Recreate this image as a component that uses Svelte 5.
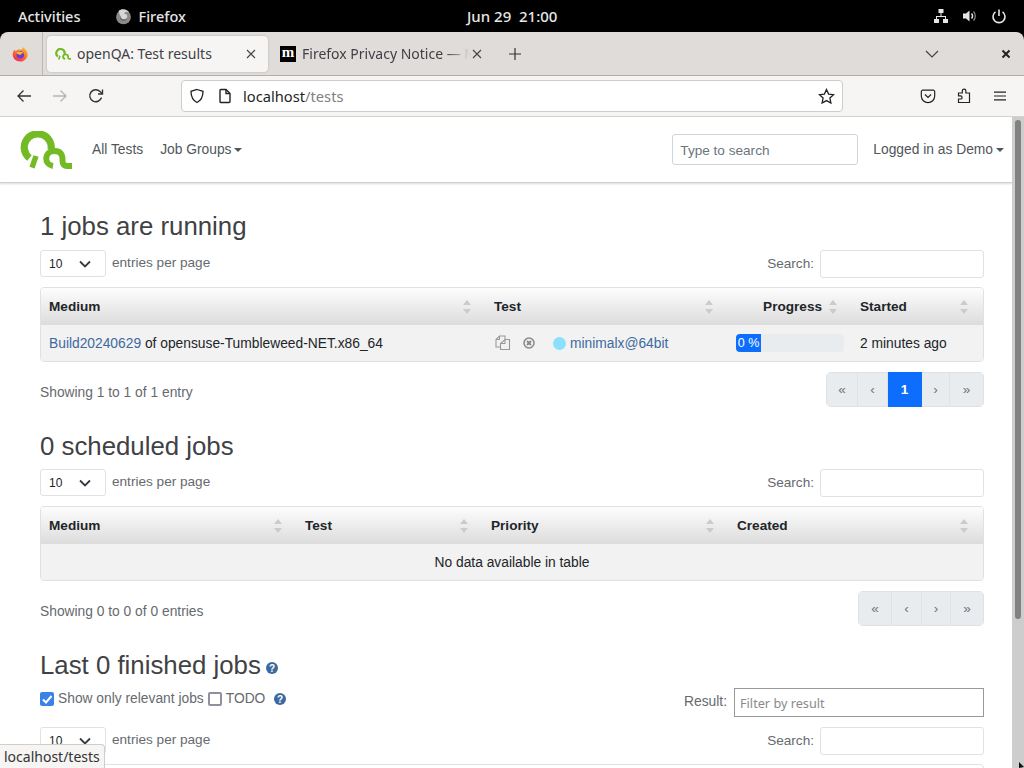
<script>
	const sortIcon = 'M4 0 L8 5 L0 5 Z M4 14 L8 9 L0 9 Z';
	const runningCols = [
		{ label: 'Medium', width: 445 },
		{ label: 'Test', width: 242 },
		{ label: 'Progress', width: 124, right: true },
		{ label: 'Started', width: 131 }
	];
	const scheduledCols = [
		{ label: 'Medium', width: 256 },
		{ label: 'Test', width: 186 },
		{ label: 'Priority', width: 246 },
		{ label: 'Created', width: 254 }
	];
	const fullPager = [
		{ text: '«', width: 32 },
		{ text: '‹', width: 30 },
		{ text: '1', width: 34, current: true },
		{ text: '›', width: 28 },
		{ text: '»', width: 34 }
	];
	const emptyPager = [
		{ text: '«', width: 34 },
		{ text: '‹', width: 30 },
		{ text: '›', width: 29 },
		{ text: '»', width: 33 }
	];
</script>

{#snippet lengthRow()}
	<div class="controls">
		<div class="length">
			<span class="select">10
				<svg width="12" height="8" viewBox="0 0 12 8"><path d="M1 1.500 L6 6.500 L11 1.500" fill="none" stroke="#343a40" stroke-width="1.800" /></svg>
			</span>
			<span class="muted per-page">entries per page</span>
		</div>
		<label class="muted search"><span class="search-label">Search:</span> <span class="input"></span></label>
	</div>
{/snippet}

{#snippet headRow(cols)}
	<div class="thead">
		{#each cols as col}
			<div class="th" style="width: {col.width}px">
				{#if col.right}<span class="grow"></span>{/if}
				<span>{col.label}</span>
				{#if !col.right}<span class="grow"></span>{/if}
				<svg class="sort" width="8" height="14" viewBox="0 0 8 14"><path d={sortIcon} fill="#c9cbcd" /></svg>
			</div>
		{/each}
	</div>
{/snippet}

{#snippet pager(cells)}
	<div class="pager">
		{#each cells as cell}
			<span class="pg" class:current={cell.current} style="width: {cell.width}px">{cell.text}</span>
		{/each}
	</div>
{/snippet}

{#snippet qaLogo(width, height)}
	<svg {width} {height} viewBox="0 0 52 38" fill="none" stroke="#73ba25">
		<path d="M9.500 27 A 13.500 13.500 0 1 1 31 19" stroke-width="7.200" />
		<path d="M16 25 L12 36.700" stroke-width="5.400" />
		<path d="M33 35 C 23.500 33.500 24 20 34.500 20 C 43.500 20 42.500 28 42.500 30 C 42.500 33.500 44.500 35 47 35 L 52 35" stroke-width="6" />
	</svg>
{/snippet}

<div class="screen">
	<header class="shell-bar">
		<span class="activities">Activities</span>
		<span class="app-name">
			<svg width="17" height="17" viewBox="0 0 18 18">
				<circle cx="9" cy="9.500" r="7.800" fill="#8b8b8b" />
				<circle cx="9" cy="10" r="3.500" fill="#5f5f5f" />
				<path d="M4 3 C6 1 12 0 15 5 C12 3 10 4 10 6 C13 6 14 9 12 11 C10 13 6 12 6 9 C5 7 4 5 4 3 Z" fill="#d6d6d6" />
			</svg>
			Firefox
		</span>
		<span class="clock">Jun 29&nbsp; 21:00</span>
		<span class="tray">
			<svg width="16" height="16" viewBox="0 0 16 16" fill="#e6e6e6">
				<rect x="5.500" y="1" width="5" height="4" /><rect x="1" y="11" width="5" height="4" /><rect x="10" y="11" width="5" height="4" />
				<path d="M7.500 5h1v3h4.500v3h-1V9H4v2H3V8h4.500z" />
			</svg>
			<svg width="16" height="16" viewBox="0 0 16 16">
				<path d="M1 5.500h3L7.500 2.500v11L4 10.500H1z" fill="#e6e6e6" />
				<path d="M9.500 5.500a3.500 3.500 0 0 1 0 5" fill="none" stroke="#e6e6e6" stroke-width="1.500" />
				<path d="M11.500 3.500a6.500 6.500 0 0 1 0 9" fill="none" stroke="#888" stroke-width="1.200" />
			</svg>
			<svg width="16" height="16" viewBox="0 0 16 16" fill="none" stroke="#e6e6e6" stroke-width="1.600">
				<path d="M8 1.500v6.500" />
				<path d="M4.500 3.800a6 6 0 1 0 7 0" />
			</svg>
		</span>
	</header>

	<div class="window">
		<div class="tabbar">
			<div class="ff-button">
				<svg width="16" height="16" viewBox="0 0 16 16">
					<defs>
						<linearGradient id="ffg" x1="0.800" y1="0" x2="0.200" y2="1">
							<stop offset="0" stop-color="#ffc21f" />
							<stop offset="0.450" stop-color="#ff7a2b" />
							<stop offset="1" stop-color="#e8255f" />
						</linearGradient>
					</defs>
					<path d="M11 0.500 C11.500 2 12.500 2.500 13.500 3.500 C15.500 5.500 16 8 15.400 10 C14.500 13.500 11.500 15.500 8 15.500 C4 15.500 0.700 12.300 0.700 8.500 C0.700 6.500 1.500 4.700 2.800 3.400 C3 4.500 3.500 5 4 5.200 C5 3 8 3.500 9.500 3.500 C10.500 2.800 11 1.800 11 0.500 Z" fill="url(#ffg)" />
					<circle cx="8.300" cy="8.700" r="3.800" fill="#6b3bd0" />
					<path d="M4.500 7 C6 5 10 5 12.300 7.800 C10.500 6.900 9.500 7.500 9.200 8.500 C7.500 9 5.500 8.500 4.500 7 Z" fill="#ffb52e" />
				</svg>
			</div>
			<div class="tab active">
				<span class="favicon">{@render qaLogo(16, 12)}</span>
				<span class="tab-title">openQA: Test results</span>
				<svg class="tab-close" width="10" height="10" viewBox="0 0 10 10"><path d="M1 1 L9 9 M9 1 L1 9" stroke="#444" stroke-width="1.100" /></svg>
			</div>
			<div class="tab second">
				<span class="moz-icon">m</span>
				<span class="tab-title fade">Firefox Privacy Notice — Mozilla</span>
				<svg class="tab-close" width="10" height="10" viewBox="0 0 10 10"><path d="M1 1 L9 9 M9 1 L1 9" stroke="#444" stroke-width="1.100" /></svg>
			</div>
			<svg class="new-tab" width="14" height="14" viewBox="0 0 14 14"><path d="M7 1v12M1 7h12" stroke="#333" stroke-width="1.200" /></svg>
			<span class="grow"></span>
			<svg class="tab-list" width="14" height="8" viewBox="0 0 14 8"><path d="M1 1 L7 7 L13 1" fill="none" stroke="#444" stroke-width="1.200" /></svg>
			<svg class="win-close" width="10" height="10" viewBox="0 0 10 10"><path d="M1.500 1.500 L8.500 8.500 M8.500 1.500 L1.500 8.500" stroke="#222" stroke-width="2" /></svg>
		</div>

		<div class="toolbar">
			<svg class="nav-icon first" width="16" height="16" viewBox="0 0 16 16" fill="none" stroke="#333" stroke-width="1.300"><path d="M15 8H2M7.500 2.500 2 8l5.500 5.500" /></svg>
			<svg class="nav-icon" width="16" height="16" viewBox="0 0 16 16" fill="none" stroke="#b5b5b5" stroke-width="1.300"><path d="M1 8h13M8.500 2.500 14 8l-5.500 5.500" /></svg>
			<svg class="nav-icon" width="16" height="16" viewBox="0 0 16 16" fill="none" stroke="#333" stroke-width="1.400"><path d="M13.500 9.500A6 6 0 1 1 12 3.500l2 2" /><path d="M14.500 1.500v4.500H10" /></svg>
			<div class="urlbar">
				<svg width="16" height="16" viewBox="0 0 16 16" fill="none" stroke="#222" stroke-width="1.300"><path d="M8 1.500 14 3.300c0 5-1.500 9-6 11.200C3.500 12.300 2 8.300 2 3.300z" /></svg>
				<svg class="page-icon" width="14" height="16" viewBox="0 0 14 16" fill="none" stroke="#222" stroke-width="1.400"><path d="M2 2.500a1 1 0 0 1 1-1h5l4 4v8a1 1 0 0 1-1 1H3a1 1 0 0 1-1-1z" /><path d="M8 1.500v4h4" /></svg>
				<span class="url">localhost<span class="url-path">/tests</span></span>
				<span class="grow"></span>
				<svg width="17" height="17" viewBox="0 0 17 17" fill="none" stroke="#222" stroke-width="1.300"><path d="M8.500 1.500l2.100 4.600 5 .6-3.700 3.400 1 5-4.400-2.500-4.400 2.500 1-5L1.400 6.700l5-.6z" /></svg>
			</div>
			<svg class="tool-icon pocket" width="16" height="16" viewBox="0 0 16 16" fill="none" stroke="#222" stroke-width="1.200"><path d="M2.800 2.200h10.400a1.500 1.500 0 0 1 1.500 1.500V8a6.700 6.700 0 0 1-13.400 0V3.700a1.500 1.500 0 0 1 1.500-1.500z" /><path d="M5 6.500l3 3 3-3" /></svg>
			<svg class="tool-icon" width="16" height="16" viewBox="0 0 16 16" fill="none" stroke="#222" stroke-width="1.200"><path d="M2.500 5h3.800V3a1.800 1.800 0 0 1 3.600 0v2h3.600v9.500H2.500V11h2a1.600 1.600 0 0 0 0-3.200h-2z" /></svg>
			<svg class="tool-icon" width="16" height="16" viewBox="0 0 16 16" stroke="#222" stroke-width="1.200"><path d="M2 4.200h12M2 8h12M2 11.800h12" /></svg>
		</div>

		<div class="viewport">
			<div class="page">
				<nav class="navbar">
					<span class="logo">{@render qaLogo(52, 38)}</span>
					<a class="nav-link">All Tests</a>
					<a class="nav-link groups">Job Groups<i class="caret"></i></a>
					<span class="grow"></span>
					<span class="nav-search">Type to search</span>
					<a class="nav-link user">Logged in as Demo<i class="caret"></i></a>
				</nav>

				<main class="content">
					<h2 class="first">1 jobs are running</h2>
					{@render lengthRow()}
					<div class="table">
						{@render headRow(runningCols)}
						<div class="row">
							<div class="td" style="width: 445px">
								<a>Build20240629</a>&nbsp;of opensuse-Tumbleweed-NET.x86_64
							</div>
							<div class="td test" style="width: 242px">
								<svg width="16" height="16" viewBox="0 0 16 16" fill="none" stroke="#9a9a9a" stroke-width="1.100"><path d="M5.500 12H1V4.500L4.500 1H10V4" /><path d="M4.500 1V4.500H1" /><path d="M10 4.500H14.500V14.500H5.500V8.500z" /><path d="M10 4.500V8.500H5.500" /></svg>
								<svg class="cancel" width="12" height="12" viewBox="0 0 12 12"><circle cx="6" cy="6" r="5" fill="none" stroke="#888" stroke-width="1.500" /><path d="M4 4l4 4M8 4l-4 4" stroke="#888" stroke-width="1.800" /></svg>
								<i class="dot"></i>
								<a>minimalx@64bit</a>
							</div>
							<div class="td" style="width: 124px">
								<div class="progress"><div class="bar" style="width: 25px">0 %</div></div>
							</div>
							<div class="td" style="width: 131px">2 minutes ago</div>
						</div>
					</div>
					<div class="info-row">
						<span class="muted info">Showing 1 to 1 of 1 entry</span>
						{@render pager(fullPager)}
					</div>

					<h2>0 scheduled jobs</h2>
					{@render lengthRow()}
					<div class="table">
						{@render headRow(scheduledCols)}
						<div class="row empty">No data available in table</div>
					</div>
					<div class="info-row">
						<span class="muted info">Showing 0 to 0 of 0 entries</span>
						{@render pager(emptyPager)}
					</div>

					<h2>Last 0 finished jobs<svg class="help big" width="12" height="12" viewBox="0 0 12 12"><circle cx="6" cy="6" r="6" fill="#3d6a9e" /><text x="6" y="9.500" text-anchor="middle" class="q">?</text></svg></h2>
					<div class="filters">
						<div class="checks">
							<span class="check on"><svg width="14" height="14" viewBox="0 0 14 14"><path d="M3 7.500 6 10.500 11.500 4" fill="none" stroke="#fff" stroke-width="2" /></svg></span>
							<span class="muted">Show only relevant jobs</span>
							<span class="check"></span>
							<span class="muted">TODO</span>
							<svg class="help" width="12" height="12" viewBox="0 0 12 12"><circle cx="6" cy="6" r="6" fill="#3d6a9e" /><text x="6" y="9.500" text-anchor="middle" class="q">?</text></svg>
						</div>
						<div class="result">
							<span class="muted result-label">Result:</span>
							<span class="result-input">Filter by result</span>
						</div>
					</div>
					{@render lengthRow()}
					<div class="table stub"></div>
				</main>
			</div>
			<div class="scrollbar"><div class="thumb"></div></div>
			<div class="status">localhost/tests</div>
			<svg class="pointer" width="5" height="6" viewBox="0 0 5 6"><path d="M0 0 L5 5 L0 6 Z" fill="#111" /></svg>
		</div>
	</div>
</div>

<style>
	:global(body) {
		margin: 0;
		background: #000;
		overflow: hidden;
	}

	.screen {
		width: 1024px;
		height: 768px;
		display: flex;
		flex-direction: column;
		overflow: hidden;
		font-family: 'Liberation Sans', Arial, sans-serif;
	}

	.grow {
		flex: 1;
	}

	/* ===== GNOME top bar ===== */
	.shell-bar {
		height: 32px;
		flex: none;
		display: flex;
		align-items: center;
		position: relative;
		background: #000;
		color: #e6e6e6;
		font-family: 'Noto Sans', sans-serif;
		font-size: 14.500px;
		font-weight: 500;
	}

	.activities {
		margin-left: 18px;
	}

	.app-name {
		display: flex;
		align-items: center;
		gap: 6px;
		margin-left: 35px;
	}

	.clock {
		position: absolute;
		left: 467px;
		font-size: 15px;
	}

	.tray {
		margin-left: auto;
		margin-right: 17px;
		display: flex;
		gap: 13px;
		align-items: center;
	}

	/* ===== Browser chrome ===== */
	.window {
		flex: 1;
		min-height: 0;
		display: flex;
		flex-direction: column;
		border-radius: 8px 8px 0 0;
		overflow: hidden;
		font-family: 'Noto Sans', sans-serif;
	}

	.tabbar {
		height: 44px;
		flex: none;
		display: flex;
		align-items: center;
		box-sizing: border-box;
		background: #dfdcd9;
		border-bottom: 1px solid #b0aeab;
	}

	.ff-button {
		width: 43px;
		height: 43px;
		flex: none;
		display: flex;
		align-items: center;
		padding-left: 12px;
		box-sizing: border-box;
		border-right: 1px solid #b9b7b4;
	}

	.tab {
		display: flex;
		align-items: center;
		height: 36px;
		box-sizing: border-box;
		font-size: 14px;
		color: #3f3f46;
		flex: none;
	}

	.tab.active {
		width: 221px;
		margin-left: 4px;
		padding: 0 12px 0 8px;
		background: #f6f5f3;
		border-radius: 4px;
		box-shadow: 0 0 2px rgba(0, 0, 0, 0.25);
	}

	.tab.second {
		width: 218px;
		padding: 0 0 0 12px;
	}

	.favicon {
		display: flex;
		margin-right: 6px;
	}

	.tab-title {
		flex: 1;
		white-space: nowrap;
		overflow: hidden;
		min-width: 0;
	}

	.tab-title.fade {
		mask-image: linear-gradient(to right, #000 85%, transparent 100%);
	}

	.moz-icon {
		width: 16px;
		height: 16px;
		margin-right: 6px;
		flex: none;
		background: #000;
		color: #fff;
		font: bold 15px/13px 'Liberation Serif', serif;
		text-align: center;
	}

	.tab-close {
		flex: none;
		margin-left: 8px;
	}

	.second .tab-close {
		margin-left: 2px;
		margin-right: 4px;
	}

	.new-tab {
		margin-left: 22px;
	}

	.tab-list {
		margin-right: 62px;
	}

	.win-close {
		margin-right: 13px;
	}

	.toolbar {
		height: 41px;
		flex: none;
		display: flex;
		align-items: center;
		background: #f6f5f3;
		border-bottom: 1px solid #d6d3cf;
		box-sizing: border-box;
	}

	.nav-icon {
		margin-left: 20px;
	}

	.nav-icon.first {
		margin-left: 16px;
	}

	.urlbar {
		width: 662px;
		height: 32px;
		box-sizing: border-box;
		margin-left: 77px;
		display: flex;
		align-items: center;
		padding: 0 7px 0 7px;
		background: #fff;
		border: 1px solid #cfcdc9;
		border-radius: 4px;
	}

	.page-icon {
		margin-left: 13px;
	}

	.url {
		margin-left: 11px;
		font-size: 14.700px;
		color: #1f1f1f;
	}

	.url-path {
		color: #808080;
	}

	.tool-icon {
		margin-left: 20px;
	}

	.tool-icon.pocket {
		margin-left: 77px;
	}

	/* ===== Page ===== */
	.viewport {
		flex: 1;
		min-height: 0;
		display: flex;
		position: relative;
		background: #fff;
		font-family: 'Liberation Sans', Arial, sans-serif;
	}

	.page {
		flex: 1;
		min-width: 0;
		overflow: hidden;
		font-size: 13.800px;
		color: #212529;
	}

	.scrollbar {
		width: 12px;
		flex: none;
		background: #cdcdcd;
		padding: 3px 3px 0;
		box-sizing: border-box;
	}

	.thumb {
		width: 6px;
		height: 499px;
		background: #7f8281;
		border-radius: 3px;
	}

	.status {
		position: absolute;
		left: 0;
		bottom: 0;
		width: 105px;
		height: 24px;
		line-height: 24px;
		padding: 0 4px;
		background: #f6f5f3;
		border: 1px solid #d0cec9;
		border-left: 0;
		border-bottom: 0;
		border-top-right-radius: 4px;
		box-sizing: border-box;
		font-family: 'Noto Sans', sans-serif;
		font-size: 14px;
		color: #333;
		white-space: nowrap;
	}

	.pointer {
		position: absolute;
		right: 0;
		bottom: 0;
	}

	.navbar {
		height: 66px;
		display: flex;
		align-items: center;
		box-sizing: border-box;
		padding: 0 0 0 20px;
		border-bottom: 1px solid #d0d0d0;
		box-shadow: 0 1px 2px rgba(0, 0, 0, 0.15);
	}

	.logo {
		display: flex;
		margin-right: 12px;
		margin-top: 1px;
	}

	.nav-link {
		padding: 0 8px;
		color: #50565b;
		white-space: nowrap;
	}

	.groups {
		margin-left: 1px;
	}

	.caret {
		display: inline-block;
		margin-left: 3px;
		vertical-align: 2px;
		border-top: 4px solid;
		border-left: 4px solid transparent;
		border-right: 4px solid transparent;
	}

	.nav-search {
		width: 186px;
		height: 31px;
		line-height: 31px;
		box-sizing: border-box;
		padding-left: 7px;
		border: 1px solid #ced4da;
		border-radius: 3px;
		color: #6c757d;
		font-size: 13.600px;
	}

	.user {
		margin-left: 7px;
	}

	.content {
		padding: 0 28px 0 40px;
	}

	h2 {
		margin: 23px 0 7px;
		height: 32px;
		font-size: 25.800px;
		font-weight: 400;
		line-height: 32px;
		color: #3f4245;
		white-space: nowrap;
	}

	h2.first {
		margin: 27px 0 8px;
	}

	.controls {
		display: flex;
		justify-content: space-between;
		align-items: flex-start;
		height: 28px;
	}

	.length {
		display: flex;
		align-items: center;
		gap: 6px;
	}

	.per-page {
		font-size: 13.600px;
		margin-top: -3px;
	}

	.muted {
		color: #666a6e;
	}

	.select {
		width: 66px;
		height: 27px;
		box-sizing: border-box;
		display: flex;
		align-items: center;
		justify-content: space-between;
		padding: 0 14px 0 8px;
		border: 1px solid #dee2e6;
		border-radius: 3px;
		font-size: 12px;
		color: #212529;
	}

	.search {
		display: flex;
		align-items: center;
		gap: 6px;
		font-size: 13.600px;
	}

	.search-label {
		margin-top: -2px;
	}

	.input {
		width: 164px;
		height: 28px;
		box-sizing: border-box;
		border: 1px solid #dee2e6;
		border-radius: 3px;
	}

	.table {
		margin-top: 9px;
		border: 1px solid #dee2e6;
		border-radius: 4px;
		overflow: hidden;
		width: 944px;
		box-sizing: border-box;
	}

	.table.stub {
		height: 40px;
	}

	.thead {
		height: 37px;
		display: flex;
		background: linear-gradient(to bottom, #fdfdfd, #dcdcdc);
	}

	.th {
		display: flex;
		align-items: center;
		padding: 0 15px 0 8px;
		box-sizing: border-box;
		font-weight: bold;
		font-size: 13.600px;
		color: #212529;
	}

	.sort {
		margin-left: 7px;
	}

	.row {
		height: 36px;
		display: flex;
		align-items: center;
		background: #f2f2f2;
		box-sizing: border-box;
	}

	.row.empty {
		justify-content: center;
	}

	.td {
		padding-left: 8px;
		box-sizing: border-box;
		white-space: nowrap;
		display: flex;
		align-items: center;
	}

	a {
		color: #3d6a9e;
	}

	.test svg {
		flex: none;
		margin-left: 1px;
	}

	.test .cancel {
		margin-left: 12px;
	}

	.dot {
		width: 13px;
		height: 13px;
		margin: 0 4px 0 18px;
		border-radius: 50%;
		background: #8be0ff;
		flex: none;
	}

	.progress {
		width: 108px;
		height: 18px;
		background: #e9ecef;
		border-radius: 4px;
		overflow: hidden;
	}

	.bar {
		height: 18px;
		line-height: 18px;
		background: #0d6efd;
		color: #fff;
		text-align: center;
		font-size: 12.500px;
		white-space: nowrap;
	}

	.info-row {
		display: flex;
		justify-content: space-between;
		align-items: center;
		margin-top: 10px;
		height: 35px;
	}

	.info {
		font-size: 13.800px;
		margin-top: 6px;
	}

	.pager {
		display: flex;
		height: 35px;
		border-radius: 5px;
		overflow: hidden;
		box-sizing: border-box;
		background: #e9ecef;
		color: #6c757d;
	}

	.pg {
		display: flex;
		align-items: center;
		justify-content: center;
		box-sizing: border-box;
		border: 1px solid #dee2e6;
		border-left: 0;
		font-size: 13.600px;
	}

	.pg:first-child {
		border-left: 1px solid #dee2e6;
	}

	.pg.current {
		background: #0d6efd;
		border-color: #0d6efd;
		color: #fff;
		font-weight: bold;
	}

	.help {
		vertical-align: baseline;
	}

	.help.big {
		margin-left: 5px;
	}

	.q {
		font: bold 10px 'Liberation Sans', sans-serif;
		fill: #fff;
	}

	.filters {
		display: flex;
		justify-content: space-between;
		align-items: flex-start;
		height: 29px;
		margin-bottom: 10px;
	}

	.checks {
		display: flex;
		align-items: center;
		gap: 4px;
		margin-top: 3px;
	}

	.checks .help {
		margin-left: 5px;
	}

	.check {
		width: 14px;
		height: 14px;
		box-sizing: border-box;
		border: 2px solid #8f8f9d;
		border-radius: 2px;
		display: inline-block;
	}

	.check.on {
		background: #3b82e8;
		border: 0;
	}

	.check.on svg {
		display: block;
	}

	.result {
		display: flex;
		align-items: center;
		gap: 7px;
	}

	.result-label {
		margin-top: -2px;
	}

	.result-input {
		width: 250px;
		height: 29px;
		line-height: 28px;
		box-sizing: border-box;
		padding-left: 5px;
		border: 1px solid #999;
		color: #8a8a8a;
		font-family: 'Noto Sans', sans-serif;
		font-size: 12.700px;
	}
</style>
